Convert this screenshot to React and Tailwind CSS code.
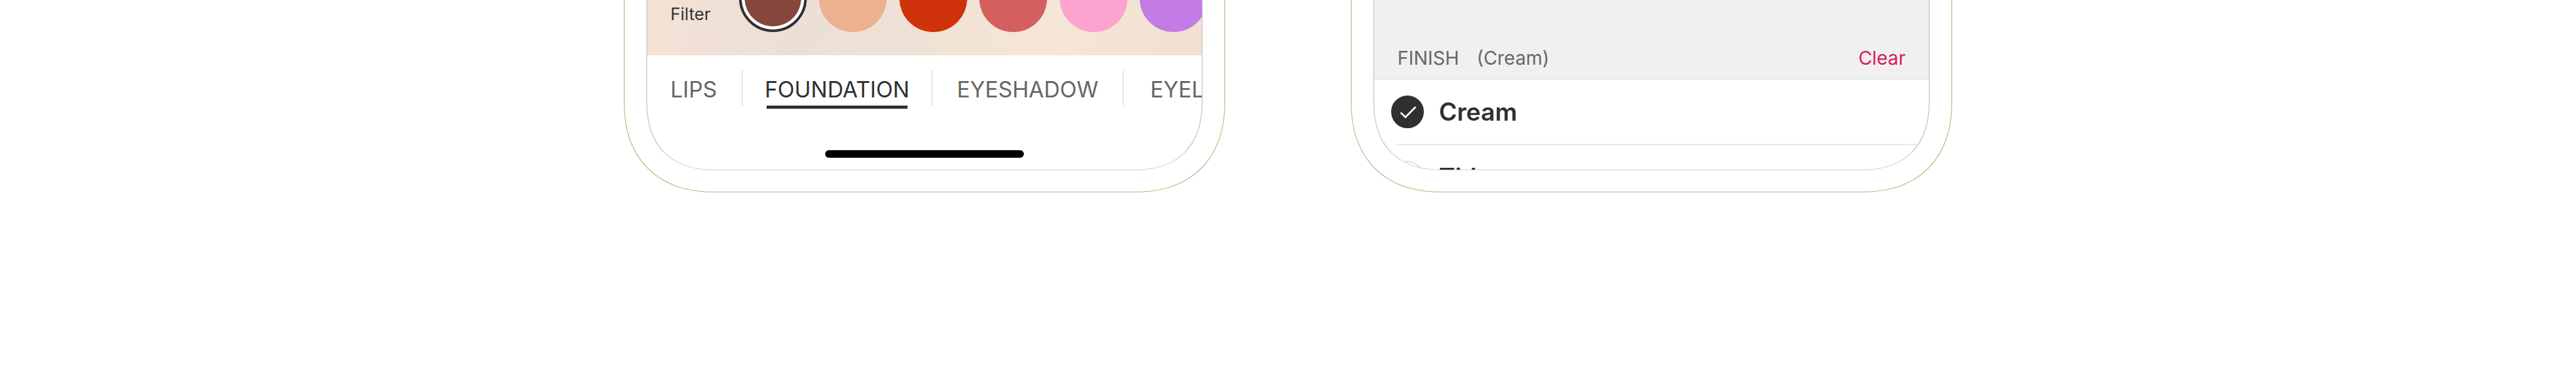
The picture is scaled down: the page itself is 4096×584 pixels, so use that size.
import React, { useState } from "react";

const SHADES = [
  { id: "brown", label: "Brown", color: "bg-[#87463c]" },
  { id: "peach", label: "Peach", color: "bg-[#edb190]" },
  { id: "red", label: "Red", color: "bg-[#d0330b]" },
  { id: "rose", label: "Rose", color: "bg-[#d45f5f]" },
  { id: "pink", label: "Pink", color: "bg-[#fca3cf]" },
  { id: "violet", label: "Violet", color: "bg-[#c37be6]" },
];

const CATEGORIES = [
  { id: "lips", label: "LIPS", cell: "w-[151px] pl-[37px]" },
  { id: "foundation", label: "FOUNDATION", cell: "w-[302px] justify-center" },
  { id: "eyeshadow", label: "EYESHADOW", cell: "w-[304px] justify-center" },
  { id: "eyeliner", label: "EYELINER", cell: "pl-[43px]" },
];

const FINISHES = ["Cream", "Title"];

const PhoneFrame = ({ children }) => (
  <div className="w-full max-w-[956px] min-w-0 px-[35px] pb-[34px] bg-white border border-t-0 border-[#c0a671] rounded-b-[145px] [corner-shape:superellipse(1.2)]">
    <div className="h-[271px] overflow-hidden bg-white border border-t-0 border-[#b8b8b8] border-b-[#d0d0d0] rounded-b-[112px] [corner-shape:superellipse(1.27)]">
      {children}
    </div>
  </div>
);

const ShadePicker = () => {
  const [shade, setShade] = useState("brown");
  const [category, setCategory] = useState("foundation");

  return (
    <div className="flex flex-col">
      {/* Shades */}
      <div className="h-[88px] flex items-end pl-[37px] pb-[37px] bg-[linear-gradient(100deg,#f4e2d6_0%,#ecdfd5_28%,#efe1d5_48%,#f5e6d7_72%,#f1e0d1_100%)]">
        <span className="w-[109px] shrink-0 mb-3 text-[27px] leading-8 text-[#333333]">
          Filter
        </span>
        <div className="w-[745px] shrink-0 flex justify-between">
          {SHADES.map((item) => (
            <button
              key={item.id}
              aria-label={item.label}
              aria-pressed={shade === item.id}
              onClick={() => setShade(item.id)}
              className={`w-[108px] h-[108px] shrink-0 rounded-full ${item.color} ${
                shade === item.id
                  ? "border-4 border-[#303030] inset-ring-5 inset-ring-white"
                  : ""
              }`}
            />
          ))}
        </div>
      </div>

      {/* Categories */}
      <nav className="flex pt-6">
        {CATEGORIES.map((item, index) => (
          <div key={item.id} className="flex shrink-0">
            {index > 0 && <div className="w-0.5 h-14 -mx-px bg-[#e4e4e4]"></div>}
            <div className={`flex ${item.cell}`}>
              <button
                onClick={() => setCategory(item.id)}
                className={`h-[61px] pt-1 flex flex-col items-center text-[35px] leading-[52px] ${
                  category === item.id ? "text-[#303030]" : "text-[#666666]"
                }`}
              >
                {item.label}
                {category === item.id && (
                  <span className="w-56 h-[5px] bg-[#303030]"></span>
                )}
              </button>
            </div>
          </div>
        ))}
      </nav>

      {/* Home indicator */}
      <div className="w-[316px] h-3 mt-[66px] mx-auto rounded-full bg-black"></div>
    </div>
  );
};

const FinishFilter = () => {
  const [selected, setSelected] = useState(["Cream"]);

  const toggle = (name) => {
    setSelected((prev) =>
      prev.includes(name) ? prev.filter((n) => n !== name) : [...prev, name]
    );
  };

  return (
    <div className="flex flex-col">
      <div className="h-[127px] flex items-end px-[37px] pb-[13px] bg-[#f0f0f0] border-b-2 border-[#e8e8e8] text-[30px] leading-10 text-[#666666]">
        <h2>FINISH</h2>
        <span className="ml-7">
          {selected.length > 0 && `(${selected.join(", ")})`}
        </span>
        <button
          onClick={() => setSelected([])}
          className="ml-auto text-[#d81b60]"
        >
          Clear
        </button>
      </div>

      <ul>
        {FINISHES.map((name) => (
          <li key={name}>
            <label className="h-[102px] flex items-center gap-6 pl-[27px]">
              <span className="grid">
                <input
                  type="checkbox"
                  checked={selected.includes(name)}
                  onChange={() => toggle(name)}
                  className="col-start-1 row-start-1 w-[52px] h-[52px] appearance-none rounded-full border-2 border-[#e0e0e4] checked:border-[#303030] checked:bg-[#303030]"
                />
                {selected.includes(name) && (
                  <svg
                    viewBox="0 0 52 52"
                    className="col-start-1 row-start-1 w-[52px] h-[52px] pointer-events-none"
                    fill="none"
                    stroke="white"
                    strokeWidth="2.8"
                  >
                    <path d="M15.2 27.2 L22.8 34.6 L39 18" />
                  </svg>
                )}
              </span>
              <span className="text-[39px] leading-[52px] font-semibold text-[#303030]">
                {name}
              </span>
            </label>
            <div className="h-0.5 ml-[37px] bg-[#e8e8e8]"></div>
          </li>
        ))}
      </ul>
    </div>
  );
};

const App = () => {
  return (
    <main className="min-h-screen flex items-start justify-center gap-[200px] bg-white font-['Inter','Liberation_Sans',sans-serif]">
      <PhoneFrame>
        <ShadePicker />
      </PhoneFrame>
      <PhoneFrame>
        <FinishFilter />
      </PhoneFrame>
    </main>
  );
};

export default App;
